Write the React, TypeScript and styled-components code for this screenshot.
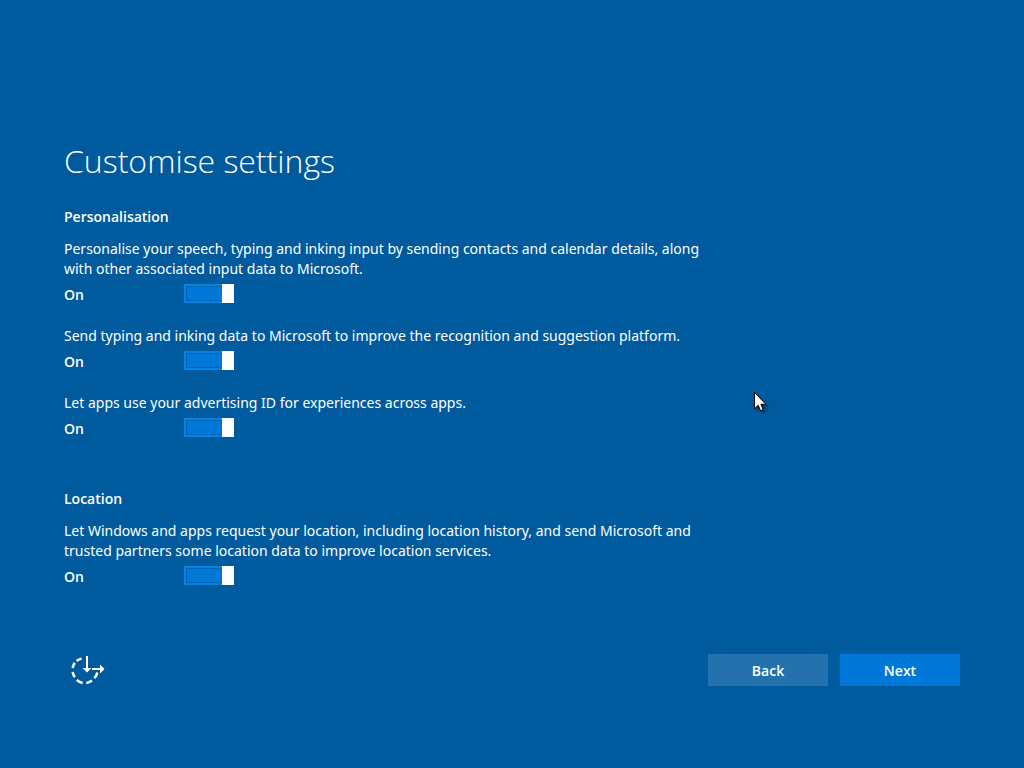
import React, { useId, useState } from "react";
import styled, { createGlobalStyle } from "styled-components";

const GlobalStyle = createGlobalStyle`
  * { box-sizing: border-box; }
  body {
    margin: 0;
    background: #005a9e;
    color: #fff;
    font: 400 14px/20px "Open Sans", "Noto Sans", sans-serif;
  }
`;

const Page = styled.main`
  min-height: 100vh;
  padding: 137px 64px 82px;
`;

const Title = styled.h1`
  margin: 0 0 22px;
  font-size: 32px;
  line-height: 48px;
  font-weight: 300;
`;

const Sections = styled.div`
  display: flex;
  flex-direction: column;
  gap: 51px;
  max-width: 648px;
`;

const Section = styled.section`
  display: flex;
  flex-direction: column;
`;

const SectionTitle = styled.h2`
  margin: 0 0 12px;
  font-size: 14px;
  line-height: 20px;
  font-weight: 600;
`;

const Settings = styled.div`
  display: flex;
  flex-direction: column;
  gap: 22px;
`;

const Description = styled.p`
  margin: 0 0 5px;
  font-family: "Noto Sans", "Open Sans", sans-serif;
`;

const ToggleRow = styled.div`
  display: flex;
  align-items: flex-start;
  height: 20px;
`;

const ToggleLabel = styled.label`
  width: 120px;
  padding-top: 1px;
  font-weight: 600;
`;

const Toggle = styled.input`
  appearance: none;
  display: flex;
  width: 50px;
  height: 19px;
  margin: 0;
  border: 2px solid #fff;

  &::before {
    content: "";
    width: 12px;
    height: 19px;
    margin: -2px;
    background: #fff;
  }

  &:checked {
    justify-content: flex-end;
    border-color: #0084e8;
    background: #0078d7;
    box-shadow: inset 0 0 0 1px #0063b1;
  }
`;

const Footer = styled.footer`
  display: flex;
  align-items: center;
  justify-content: space-between;
  margin-top: 68px;
`;

const EaseButton = styled.button`
  display: flex;
  width: 48px;
  height: 32px;
  padding: 0;
  border: 0;
  background: none;
  color: inherit;

  svg { overflow: visible; }
`;

const Actions = styled.div`
  display: flex;
  gap: 12px;
`;

const ActionButton = styled.button<{ $primary?: boolean }>`
  width: 120px;
  height: 32px;
  padding: 2px 0 0;
  border: 0;
  background: ${(p) => (p.$primary ? "#0078d7" : "#2371ad")};
  color: #fff;
  font: inherit;
  font-weight: 600;
`;

const Pointer = styled.svg`
  position: absolute;
  left: 754px;
  top: 392px;
  pointer-events: none;
  filter: drop-shadow(2px 2px 1px rgba(0, 0, 0, 0.4));
`;

const groups = [
  {
    title: "Personalisation",
    settings: [
      "Personalise your speech, typing and inking input by sending contacts and calendar details, along with other associated input data to Microsoft.",
      "Send typing and inking data to Microsoft to improve the recognition and suggestion platform.",
      "Let apps use your advertising ID for experiences across apps.",
    ],
  },
  {
    title: "Location",
    settings: [
      "Let Windows and apps request your location, including location history, and send Microsoft and trusted partners some location data to improve location services.",
    ],
  },
];

function Setting({ text }: { text: string }) {
  const id = useId();
  const [on, setOn] = useState(true);
  return (
    <div>
      <Description id={id + "-text"}>{text}</Description>
      <ToggleRow>
        <ToggleLabel htmlFor={id}>{on ? "On" : "Off"}</ToggleLabel>
        <Toggle
          id={id}
          type="checkbox"
          role="switch"
          aria-describedby={id + "-text"}
          checked={on}
          onChange={(e) => setOn(e.target.checked)}
        />
      </ToggleRow>
    </div>
  );
}

export default function App() {
  return (
    <Page>
      <GlobalStyle />
      <Title>Customise settings</Title>
      <Sections>
        {groups.map((group) => (
          <Section key={group.title}>
            <SectionTitle>{group.title}</SectionTitle>
            <Settings>
              {group.settings.map((text) => (
                <Setting key={text} text={text} />
              ))}
            </Settings>
          </Section>
        ))}
      </Sections>
      <Footer>
        <EaseButton type="button" aria-label="Ease of access">
          <svg width="48" height="32" viewBox="0 0 48 32" fill="none" stroke="currentColor" strokeWidth="2">
            <path strokeWidth="2.5" d="M17.6 4.6A12.3 12.3 0 0 0 12.6 6.9M10.8 8.7A12.3 12.3 0 0 0 8.7 14M8.7 18A12.3 12.3 0 0 0 10.8 23.3M12.8 25.8A12.3 12.3 0 0 0 18.6 29M22.3 29A12.3 12.3 0 0 0 28 26.5M30.4 24.2A12.3 12.3 0 0 0 33.3 18.4" />
            <path d="M23 2v13M28 15h9" />
            <path d="M18.5 14h9l-4.5 4.5zM36 10.5v9l4.5-4.5z" fill="currentColor" stroke="none" />
          </svg>
        </EaseButton>
        <Actions>
          <ActionButton type="button">Back</ActionButton>
          <ActionButton type="button" $primary>Next</ActionButton>
        </Actions>
      </Footer>
      <Pointer width="13" height="20" viewBox="0 0 13 20" aria-hidden="true">
        <path
          d="M.5 .5v16.2l3.7-3.5 2.4 5.6 2.6-1.1-2.3-5.4h5z"
          fill="#fff"
          stroke="#000"
          strokeWidth="1"
        />
      </Pointer>
    </Page>
  );
}
